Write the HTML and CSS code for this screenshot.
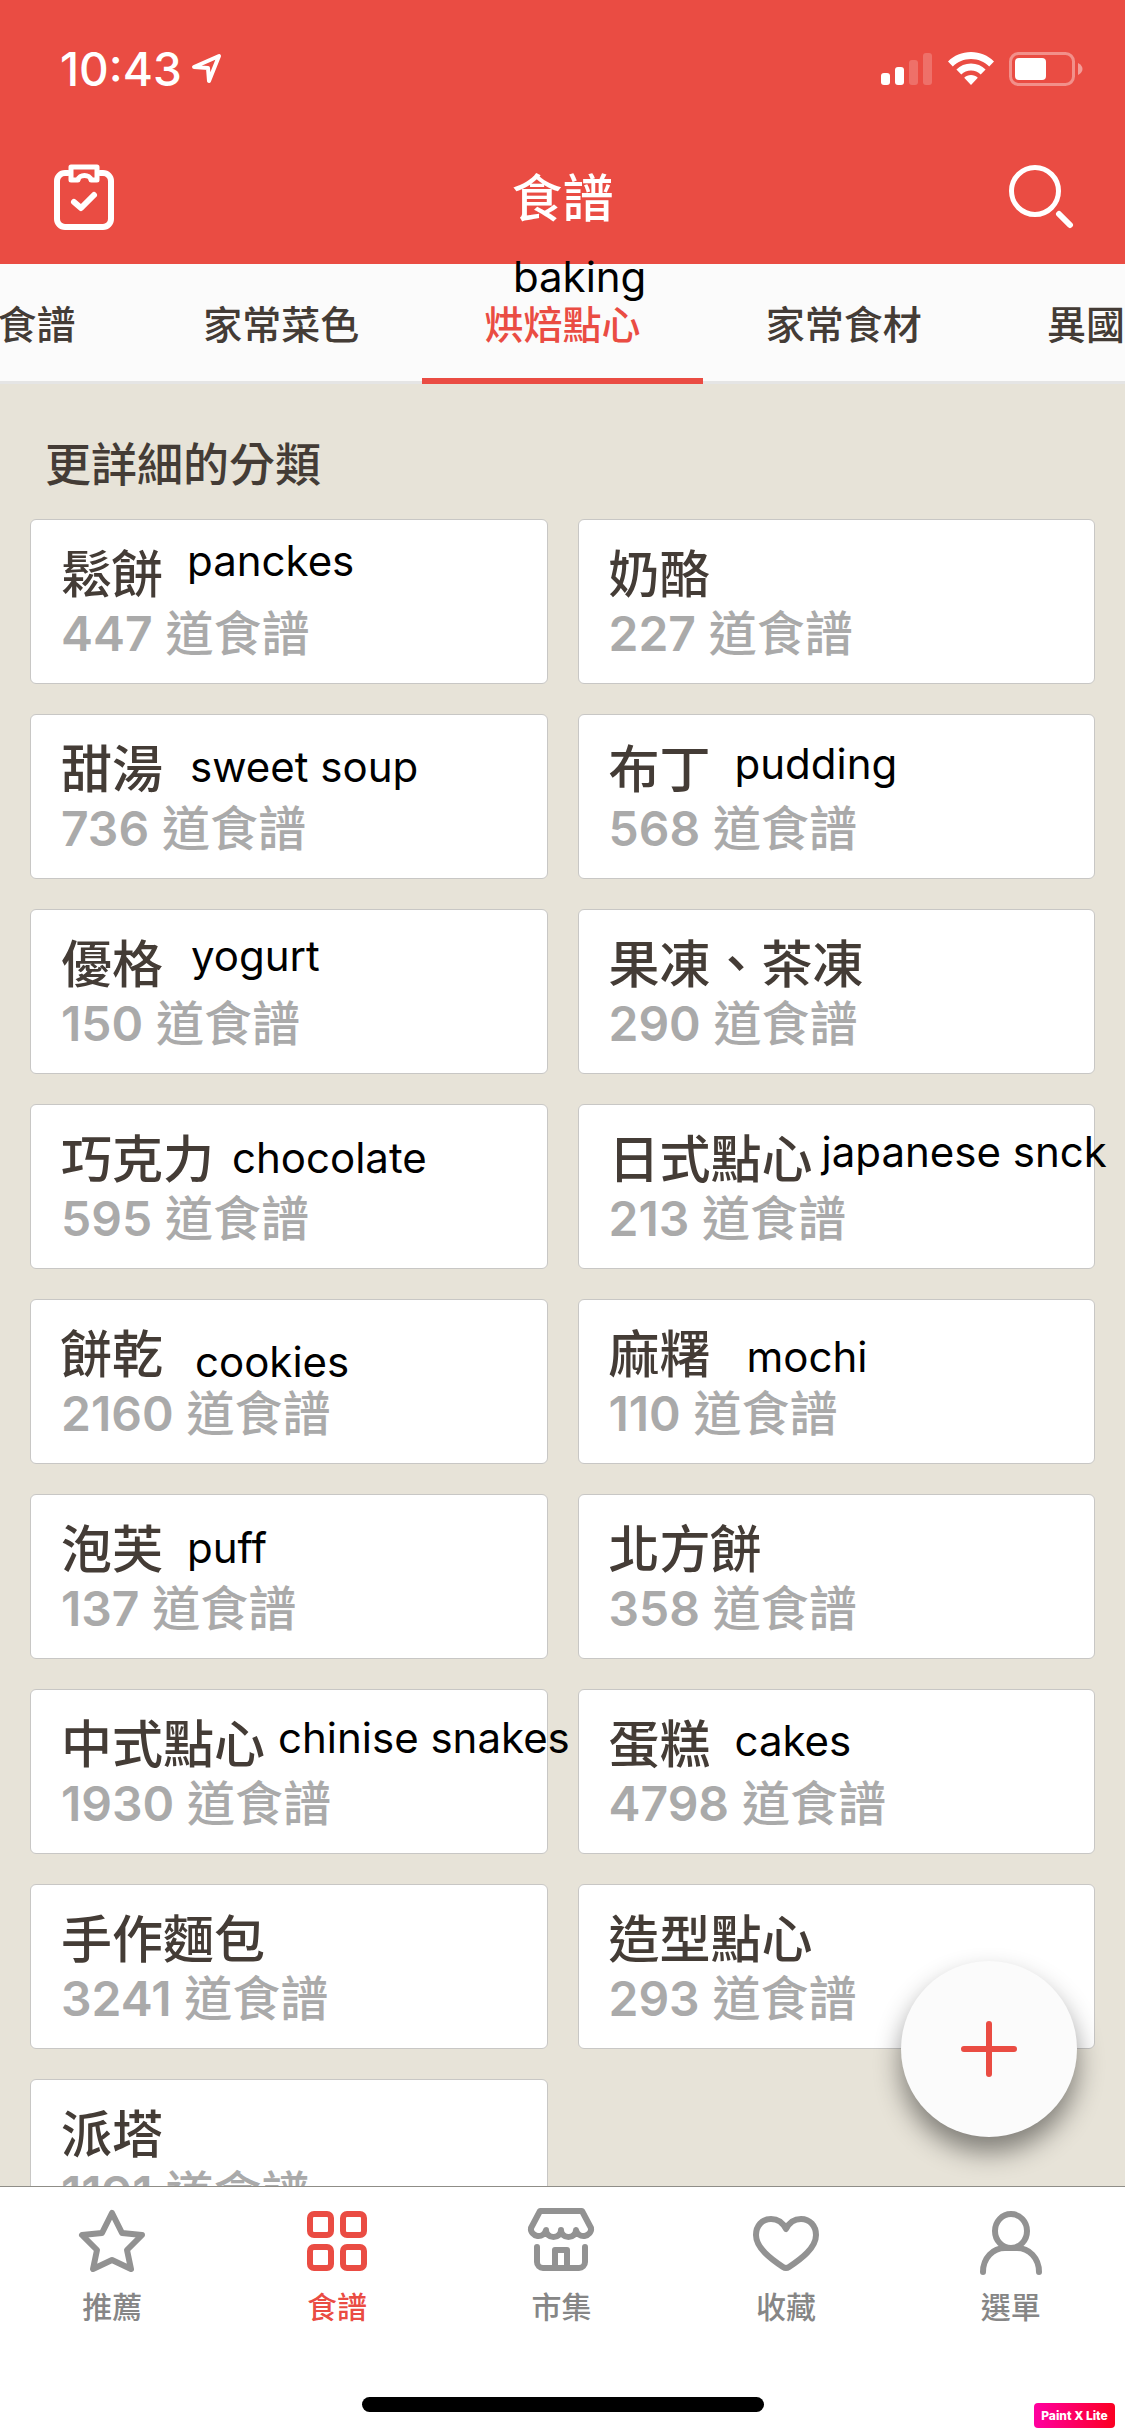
FILE: index.html
```html
<!DOCTYPE html>
<html lang="zh-Hant">
<head>
<meta charset="utf-8">
<meta name="viewport" content="width=device-width, initial-scale=1">
<title>食譜</title>
<link rel="stylesheet" href="styles.css">
</head>
<body>
<header class="header">
  <div class="status">
    <div class="status-group">
      <span class="clock">10:43</span>
      <svg class="location" width="32" height="32" viewBox="0 0 32 32"><path d="M3 14 L28 3 L18 28 L17 15 Z"/></svg>
    </div>
    <div class="status-group status-right">
      <svg width="52" height="34" viewBox="0 0 52 34" fill="#fff"><rect x="0" y="21" width="9" height="12" rx="3"/><rect x="14" y="15" width="9" height="18" rx="3"/><g opacity=".2"><rect x="28" y="8" width="9" height="25" rx="3"/><rect x="42" y="1" width="9" height="32" rx="3"/></g></svg>
      <svg width="46" height="34" viewBox="0 0 46 34" fill="#fff"><path d="M23 0C14 0 6 3.500 0 9.500L4.800 14.500C9.700 9.800 16 7.100 23 7.100S36.300 9.800 41.200 14.500L46 9.500C40 3.500 32 0 23 0Z"/><path d="M23 11.500C17.300 11.500 12.200 13.700 8.400 17.500L13.300 22.500C15.900 20 19.200 18.600 23 18.600S30.100 20 32.700 22.500L37.600 17.500C33.800 13.700 28.700 11.500 23 11.500Z"/><path d="M23 23C20.400 23 18 24 16.200 25.800L23 33L29.800 25.800C28 24 25.600 23 23 23Z"/></svg>
      <svg width="74" height="34" viewBox="0 0 74 34"><rect x="1.500" y="1.500" width="63" height="31" rx="8" fill="none" stroke="#fff" stroke-width="3" opacity=".38"/><rect x="6" y="6" width="31" height="22" rx="4" fill="#fff"/><path d="M69 11C75 14 75 20 69 23Z" fill="#fff" opacity=".45"/></svg>
    </div>
  </div>
  <div class="titlebar">
    <button class="icon-button" aria-label="清單">
      <svg width="66" height="72" viewBox="0 1 66 72"><path d="M17 12H14A8 8 0 0 0 6 20V58A8 8 0 0 0 14 66H52A8 8 0 0 0 60 58V20A8 8 0 0 0 52 12H49"/><path d="M20 6H46V19H40C39 13 28 13 27 19H20Z" stroke-width="5"/><path d="M23 41L30 47L43 34"/></svg>
    </button>
    <h1 class="title">食譜</h1>
    <button class="icon-button" aria-label="搜尋">
      <svg width="66" height="72" viewBox="0 0 66 72"><circle cx="27" cy="29" r="23.500" stroke-width="5"/><path d="M51 52L62 63"/></svg>
    </button>
  </div>
</header>
<nav class="tabs" aria-label="食譜分類">
  <a class="tab tab-first" href="#recipes">食譜</a>
  <a class="tab" href="#dishes">家常菜色</a>
  <a class="tab tab-active" href="#baking" aria-current="page">烘焙點心<span class="note note-baking">baking</span></a>
  <a class="tab" href="#ingredients">家常食材</a>
  <a class="tab tab-last" href="#world">異國</a>
</nav>
<div class="content">
  <main class="scroller">
    <h2 class="section-title">更詳細的分類</h2>
    <div class="cards">
      <a class="card" href="#c1"><span class="name">鬆餅</span><span class="count"><b>447</b> 道食譜</span><span class="note note-panckes">panckes</span></a>
      <a class="card" href="#c2"><span class="name">奶酪</span><span class="count"><b>227</b> 道食譜</span></a>
      <a class="card" href="#c3"><span class="name">甜湯</span><span class="count"><b>736</b> 道食譜</span><span class="note note-soup">sweet soup</span></a>
      <a class="card" href="#c4"><span class="name">布丁</span><span class="count"><b>568</b> 道食譜</span><span class="note note-pudding">pudding</span></a>
      <a class="card" href="#c5"><span class="name">優格</span><span class="count"><b>150</b> 道食譜</span><span class="note note-yogurt">yogurt</span></a>
      <a class="card" href="#c6"><span class="name">果凍、茶凍</span><span class="count"><b>290</b> 道食譜</span></a>
      <a class="card" href="#c7"><span class="name">巧克力</span><span class="count"><b>595</b> 道食譜</span><span class="note note-chocolate">chocolate</span></a>
      <a class="card" href="#c8"><span class="name">日式點心</span><span class="count"><b>213</b> 道食譜</span><span class="note note-japanese">japanese snck</span></a>
      <a class="card" href="#c9"><span class="name">餅乾</span><span class="count"><b>2160</b> 道食譜</span><span class="note note-cookies">cookies</span></a>
      <a class="card" href="#c10"><span class="name">麻糬</span><span class="count"><b>110</b> 道食譜</span><span class="note note-mochi">mochi</span></a>
      <a class="card" href="#c11"><span class="name">泡芙</span><span class="count"><b>137</b> 道食譜</span><span class="note note-puff">puff</span></a>
      <a class="card" href="#c12"><span class="name">北方餅</span><span class="count"><b>358</b> 道食譜</span></a>
      <a class="card" href="#c13"><span class="name">中式點心</span><span class="count"><b>1930</b> 道食譜</span><span class="note note-chinise">chinise snakes</span></a>
      <a class="card" href="#c14"><span class="name">蛋糕</span><span class="count"><b>4798</b> 道食譜</span><span class="note note-cakes">cakes</span></a>
      <a class="card" href="#c15"><span class="name">手作麵包</span><span class="count"><b>3241</b> 道食譜</span></a>
      <a class="card" href="#c16"><span class="name">造型點心</span><span class="count"><b>293</b> 道食譜</span></a>
      <a class="card" href="#c17"><span class="name">派塔</span><span class="count"><b>1191</b> 道食譜</span></a>
    </div>
  </main>
  <button class="fab" aria-label="新增食譜">
    <svg width="60" height="60" viewBox="0 0 60 60"><path d="M30 5V55M5 30H55"/></svg>
  </button>
</div>
<footer class="bottom">
  <nav class="bottom-nav" aria-label="主選單">
    <a class="item" href="#featured"><svg width="72" height="72" viewBox="0 0 72 72"><path d="M36 8L46 28L66 30L51 45L55 64L36 55L17 64L21 45L6 30L26 28Z"/></svg>推薦</a>
    <a class="item item-active" href="#recipes" aria-current="page"><svg width="72" height="72" viewBox="0 0 72 72"><rect x="9" y="9" width="21" height="21" rx="4"/><rect x="42" y="9" width="21" height="21" rx="4"/><rect x="9" y="42" width="21" height="21" rx="4"/><rect x="42" y="42" width="21" height="21" rx="4"/></svg>食譜</a>
    <a class="item" href="#market"><svg width="72" height="72" viewBox="0 0 72 72"><path d="M15 6H57L66 23A7.500 7 0 0 1 51 25A7.500 7 0 0 1 36 25A7.500 7 0 0 1 21 25A7.500 7 0 0 1 6 23Z"/><path d="M12 42V57A6 6 0 0 0 18 63H54A6 6 0 0 0 60 57V42M30 63V45H42V63"/></svg>市集</a>
    <a class="item" href="#saved"><svg width="72" height="72" viewBox="0 0 72 72"><path d="M36 24C33 18 28 14 21 14C12 14 6 21 6 30C6 43 21 54 33 62Q36 64 39 62C51 54 66 43 66 30C66 21 60 14 51 14C44 14 39 18 36 24Z"/></svg>收藏</a>
    <a class="item" href="#menu"><svg width="72" height="72" viewBox="0 0 72 72"><ellipse cx="36" cy="26" rx="16" ry="17"/><path d="M8 67C8 53 18 43 30 43H42C54 43 64 53 64 67"/></svg>選單</a>
  </nav>
  <div class="home-indicator"></div>
  <span class="badge">Paint X Lite</span>
</footer>
</body>
</html>
```
FILE: styles.css
```css
:root {
  --red: #ea4c43;
  --ink: #443c36;
  --paper: #e7e3d8;
}

* {
  box-sizing: border-box;
}

body {
  margin: 0;
  height: 100vh;
  display: flex;
  flex-direction: column;
  overflow: hidden;
  background: var(--paper);
  color: var(--ink);
  font-family: Inter, "Noto Sans CJK TC", sans-serif;
  font-weight: 500;
}

a {
  color: inherit;
  text-decoration: none;
}

button {
  padding: 0;
  border: 0;
  background: none;
  cursor: pointer;
}

svg {
  display: block;
  flex: none;
}

/* Header */
.header {
  background: var(--red);
  color: #fff;
}

.status {
  display: flex;
  justify-content: space-between;
  align-items: center;
  height: 132px;
  padding: 6px 42px 0 60px;
}

.status-group {
  display: flex;
  align-items: center;
  gap: 9px;
}

.status-right {
  gap: 15px;
}

.clock {
  font-size: 46px;
  font-weight: 500;
  line-height: 54px;
}

.location {
  fill: none;
  stroke: #fff;
  stroke-width: 4;
  stroke-linejoin: round;
}

.titlebar {
  display: flex;
  justify-content: space-between;
  align-items: center;
  height: 132px;
  padding: 0 51px;
}

.icon-button svg {
  fill: none;
  stroke: #fff;
  stroke-width: 6;
  stroke-linecap: round;
  stroke-linejoin: round;
}

.title {
  margin: 0;
  padding-top: 2px;
  font-size: 51px;
  font-weight: 500;
  line-height: 60px;
}

/* Category tabs: the outer two are half scrolled out of view */
.tabs {
  display: grid;
  grid-template-columns: minmax(0, 1fr) repeat(3, minmax(0, 2fr)) minmax(0, 1fr);
  background: #fbfbfb;
  box-shadow: inset 0 -3px #e5e5e5;
}

.tab {
  position: relative;
  display: flex;
  justify-content: center;
  padding: 34px 0 26px;
  border-bottom: 6px solid transparent;
  font-size: 39px;
  line-height: 54px;
  white-space: nowrap;
}

.tab-first {
  justify-content: flex-end;
  padding-right: 65px;
}

.tab-last {
  justify-content: flex-end;
}

.tab-active {
  border-color: var(--red);
  color: var(--red);
}

/* Category cards */
.content {
  position: relative;
  flex: 1;
  min-height: 0;
}

.scroller {
  height: 100%;
  padding: 50px 30px 30px;
  overflow-y: auto;
  scrollbar-width: none;
}

.section-title {
  margin: 0 15px 25px;
  font-size: 46px;
  font-weight: 500;
  line-height: 60px;
}

.cards {
  display: grid;
  grid-template-columns: 1fr 1fr;
  gap: 30px;
}

.card {
  position: relative;
  display: flex;
  flex-direction: column;
  padding: 25px 30px 20px;
  border: 1px solid #c8c7c5;
  border-radius: 6px;
  background: #fff;
}

.name {
  font-size: 51px;
  line-height: 60px;
}

.count {
  color: #aaa;
  font-size: 48px;
  font-weight: 500;
  line-height: 58px;
}

.count b {
  font-weight: 600;
}

/* Translations placed freely over the screen */
.note {
  position: absolute;
  z-index: 1;
  color: #000;
  font-size: 42px;
  font-weight: 400;
  line-height: 50px;
  white-space: nowrap;
}

.note-baking { left: 91px; top: -12px; }
.note-panckes { left: 156px; top: 16px; }
.note-soup { left: 159px; top: 27px; }
.note-pudding { left: 156px; top: 24px; }
.note-yogurt { left: 160px; top: 21px; }
.note-chocolate { left: 201px; top: 28px; }
.note-japanese { left: 243px; top: 22px; }
.note-cookies { left: 164px; top: 37px; }
.note-mochi { left: 168px; top: 32px; }
.note-puff { left: 156px; top: 28px; }
.note-chinise { left: 247px; top: 23px; }
.note-cakes { left: 156px; top: 26px; }

.fab {
  position: absolute;
  right: 48px;
  bottom: 49px;
  z-index: 2;
  display: flex;
  align-items: center;
  justify-content: center;
  width: 176px;
  height: 176px;
  border-radius: 50%;
  background: #fbfbfb;
  box-shadow: 0 15px 27px rgba(0, 0, 0, 0.45);
}

.fab svg {
  stroke: var(--red);
  stroke-width: 6;
  stroke-linecap: round;
}

/* Bottom bar */
.bottom {
  position: relative;
  padding-bottom: 24px;
  border-top: 1px solid #8f8d87;
  background: #fff;
}

.bottom-nav {
  display: flex;
  padding: 18px 2px 70px 0;
}

.item {
  flex: 1;
  display: flex;
  flex-direction: column;
  align-items: center;
  gap: 10px;
  color: #868686;
  font-size: 30px;
  line-height: 40px;
}

.item svg {
  fill: none;
  stroke: #929292;
  stroke-width: 6;
  stroke-linecap: round;
  stroke-linejoin: round;
}

.item-active {
  color: var(--red);
}

.item-active svg {
  stroke: var(--red);
}

.home-indicator {
  width: 402px;
  height: 15px;
  margin: 0 auto;
  border-radius: 8px;
  background: #000;
}

.badge {
  position: absolute;
  right: 10px;
  bottom: 8px;
  width: 81px;
  border-radius: 4px;
  background: linear-gradient(90deg, #ff00a0, #fb0022);
  color: #fff;
  font-size: 12px;
  font-weight: 800;
  line-height: 25px;
  text-align: center;
}
```
